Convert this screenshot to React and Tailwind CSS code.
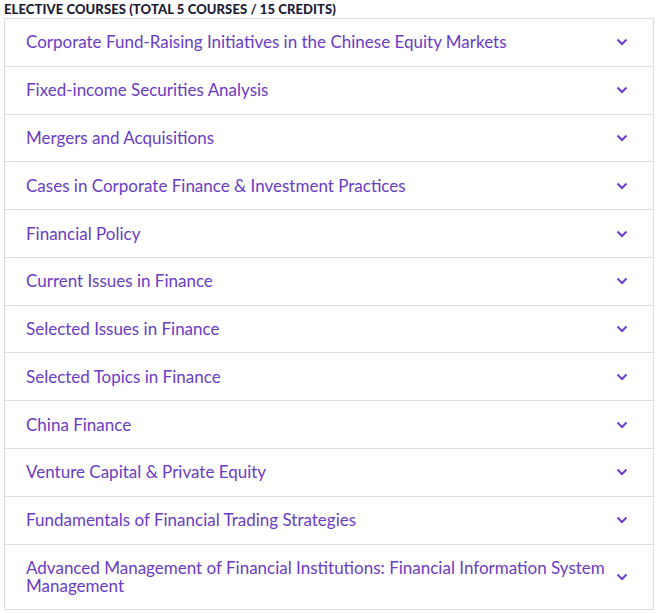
import React from 'react';

const courses = [
  'Corporate Fund-Raising Initiatives in the Chinese Equity Markets',
  'Fixed-income Securities Analysis',
  'Mergers and Acquisitions',
  'Cases in Corporate Finance & Investment Practices',
  'Financial Policy',
  'Current Issues in Finance',
  'Selected Issues in Finance',
  'Selected Topics in Finance',
  'China Finance',
  'Venture Capital & Private Equity',
  'Fundamentals of Financial Trading Strategies',
  'Advanced Management of Financial Institutions: Financial Information System Management',
];

function Chevron() {
  return (
    <svg width="12" height="8" viewBox="0 0 12 8" className="shrink-0">
      <path d="M1.5 1.5 L6 6 L10.5 1.5" fill="none" stroke="#6a3fd0" strokeWidth="2" />
    </svg>
  );
}

export default function App() {
  return (
    <div className="bg-white w-[656px] font-['Lato',sans-serif]">
      <h2 className="px-[4px] pt-[1px] text-[13px] leading-[17px] font-black tracking-[0.1px] text-[#1d1b36]">
        ELECTIVE COURSES (TOTAL 5 COURSES / 15 CREDITS)
      </h2>
      <div className="ml-[4px] mr-[2px] border border-[#dedbe6] border-b-0">
        {courses.map((c, i) => (
          <div
            key={i}
            className="flex items-center justify-between gap-[6px] pl-[21px] pr-[25px] py-[14.4px] border-b border-[#dedbe6]"
          >
            <span className="text-[17px] leading-[18px] text-[#6a3cc6]">{c}</span>
            <Chevron />
          </div>
        ))}
      </div>
    </div>
  );
}
